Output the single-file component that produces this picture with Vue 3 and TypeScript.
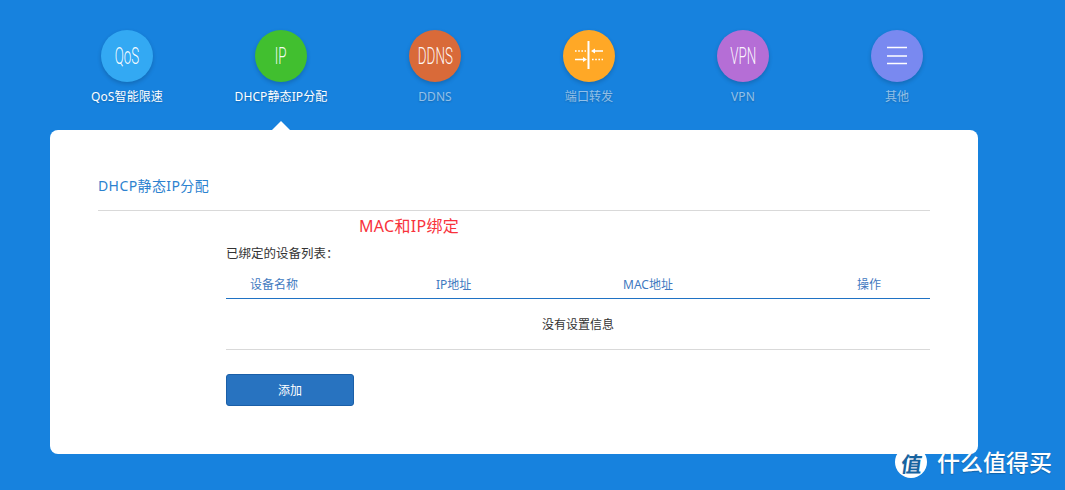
<script setup lang="ts">
const tabs = [
  { key: 'qos', badge: 'QoS', label: 'QoS智能限速', color: '#33a9f3', on: true },
  { key: 'ip', badge: 'IP', label: 'DHCP静态IP分配', color: '#41bf2f', on: true },
  { key: 'ddns', badge: 'DDNS', label: 'DDNS', color: '#d96a39', on: false },
  { key: 'port', badge: '', label: '端口转发', color: '#ffa826', on: false },
  { key: 'vpn', badge: 'VPN', label: 'VPN', color: '#b56ed6', on: false },
  { key: 'more', badge: '', label: '其他', color: '#7989f0', on: false },
]

const columns = ['设备名称', 'IP地址', 'MAC地址', '操作']
</script>

<template>
  <div class="page">
    <nav class="tabs">
      <div v-for="tab in tabs" :key="tab.key" class="tab">
        <div class="tab__icon" :style="{ background: tab.color }">
          <span v-if="tab.badge" class="tab__badge">{{ tab.badge }}</span>
          <svg v-else-if="tab.key === 'port'" width="52" height="52" viewBox="0 0 52 52" fill="none" stroke="#fff">
            <path d="M25.500 11v28" stroke-width="2" />
            <path d="M12 21h11M29 29.500h11" stroke-width="1.400" stroke-dasharray="1.600 1.600" />
            <path d="M31 21h9M12 29.500h9" stroke-width="1.400" />
            <path d="M28 21l4-2.500v5zM24 29.500l-4-2.500v5z" fill="#fff" stroke="none" />
          </svg>
          <svg v-else width="52" height="52" viewBox="0 0 52 52" fill="none" stroke="#fff" stroke-width="1.600">
            <path d="M16 17.500h20M16 26h20M16 33.500h20" />
          </svg>
        </div>
        <div class="tab__label" :class="{ 'tab__label--dim': !tab.on }">{{ tab.label }}</div>
      </div>
    </nav>

    <main class="card">
      <h2 class="card__title">DHCP静态IP分配</h2>
      <div class="section">
        <div class="section__heading">MAC和IP绑定</div>
        <div class="section__sub">已绑定的设备列表：</div>
        <div class="table-head">
          <span v-for="col in columns" :key="col">{{ col }}</span>
        </div>
        <div class="table-empty">没有设置信息</div>
        <button class="add-btn" type="button">添加</button>
      </div>
    </main>

    <div class="watermark">
      <span class="watermark__logo"><i>值</i></span>
      <span class="watermark__text">什么值得买</span>
    </div>
  </div>
</template>

<style scoped>
.page {
  position: relative;
  width: 1065px;
  height: 490px;
  overflow: hidden;
  background: #1782de;
  font-family: "Noto Sans", "Noto Sans CJK SC", sans-serif;
}

.tabs {
  display: flex;
  width: 924px;
  height: 100px;
  margin-left: 50px;
  padding-top: 30px;
}

.tab {
  position: relative;
  width: 154px;
  display: flex;
  flex-direction: column;
  align-items: center;
}

.tab:nth-child(2)::after {
  content: "";
  position: absolute;
  left: 68px;
  top: 91px;
  border-left: 9px solid transparent;
  border-right: 9px solid transparent;
  border-bottom: 9px solid #fff;
}

.tab__icon {
  width: 52px;
  height: 52px;
  border-radius: 50%;
  display: flex;
  align-items: center;
  justify-content: center;
  box-shadow: 0 2px 4px rgba(0, 0, 0, 0.18);
}

.tab__badge {
  color: rgba(255, 255, 255, 0.95);
  font-family: "Roboto", sans-serif;
  font-size: 24px;
  font-weight: 300;
  transform: scaleX(0.56);
}

.tab__label {
  margin-top: 6px;
  font-size: 12px;
  line-height: 18px;
  letter-spacing: 0.1px;
  color: #fff;
  text-shadow: 0 1px 2px rgba(0, 0, 0, 0.2);
  white-space: nowrap;
}

.tab__label--dim {
  color: rgba(255, 255, 255, 0.55);
}

.card {
  width: 928px;
  height: 324px;
  margin-left: 50px;
  padding: 0 48px;
  box-sizing: border-box;
  background: #fff;
  border-radius: 8px;
}

.card__title {
  margin: 0;
  height: 81px;
  padding-top: 46px;
  box-sizing: border-box;
  border-bottom: 1px solid #d9d9d9;
  color: #2c82cf;
  font-size: 14px;
  line-height: 20px;
  letter-spacing: 0.4px;
  font-weight: 400;
}

.section {
  padding-left: 128px;
}

.section__heading {
  padding: 4px 0 0 133px;
  height: 26px;
  box-sizing: border-box;
  color: #f8323c;
  font-size: 16px;
  line-height: 22px;
  letter-spacing: 0.3px;
}

.section__sub {
  height: 20px;
  padding-top: 7px;
  color: #333;
  font-size: 12.5px;
  line-height: 20px;
}

.table-head {
  display: grid;
  grid-template-columns: 186px 187px 234px 1fr;
  height: 27px;
  margin-top: 8px;
  padding-left: 24px;
  padding-top: 5px;
  border-bottom: 1px solid #1f72c4;
  color: #3f7abf;
  font-size: 12px;
  line-height: 16px;
  box-sizing: border-box;
}

.table-empty {
  height: 51px;
  box-sizing: border-box;
  border-bottom: 1px solid #d9d9d9;
  text-align: center;
  color: #333;
  font-size: 12px;
  line-height: 52px;
}

.add-btn {
  display: block;
  width: 128px;
  height: 32px;
  margin-top: 24px;
  padding: 0;
  border: 1px solid #1a5fa8;
  border-radius: 3px;
  background: #2873c0;
  color: #fff;
  font-family: inherit;
  font-size: 12px;
}

.watermark {
  position: absolute;
  left: 895px;
  top: 446px;
  display: flex;
  align-items: center;
  gap: 10px;
}

.watermark__logo {
  width: 32px;
  height: 32px;
  border-radius: 50%;
  background: #fff;
  color: #17639f;
  font-size: 21px;
  font-weight: 700;
  line-height: 36px;
  text-align: center;
}

.watermark__logo i {
  display: inline-block;
  font-style: normal;
  transform: skewX(-8deg);
}

.watermark__text {
  color: #fff;
  font-size: 23px;
  font-weight: 500;
  line-height: 28px;
  text-shadow: 0 1px 1px rgba(0, 0, 0, 0.25);
  white-space: nowrap;
}
</style>
